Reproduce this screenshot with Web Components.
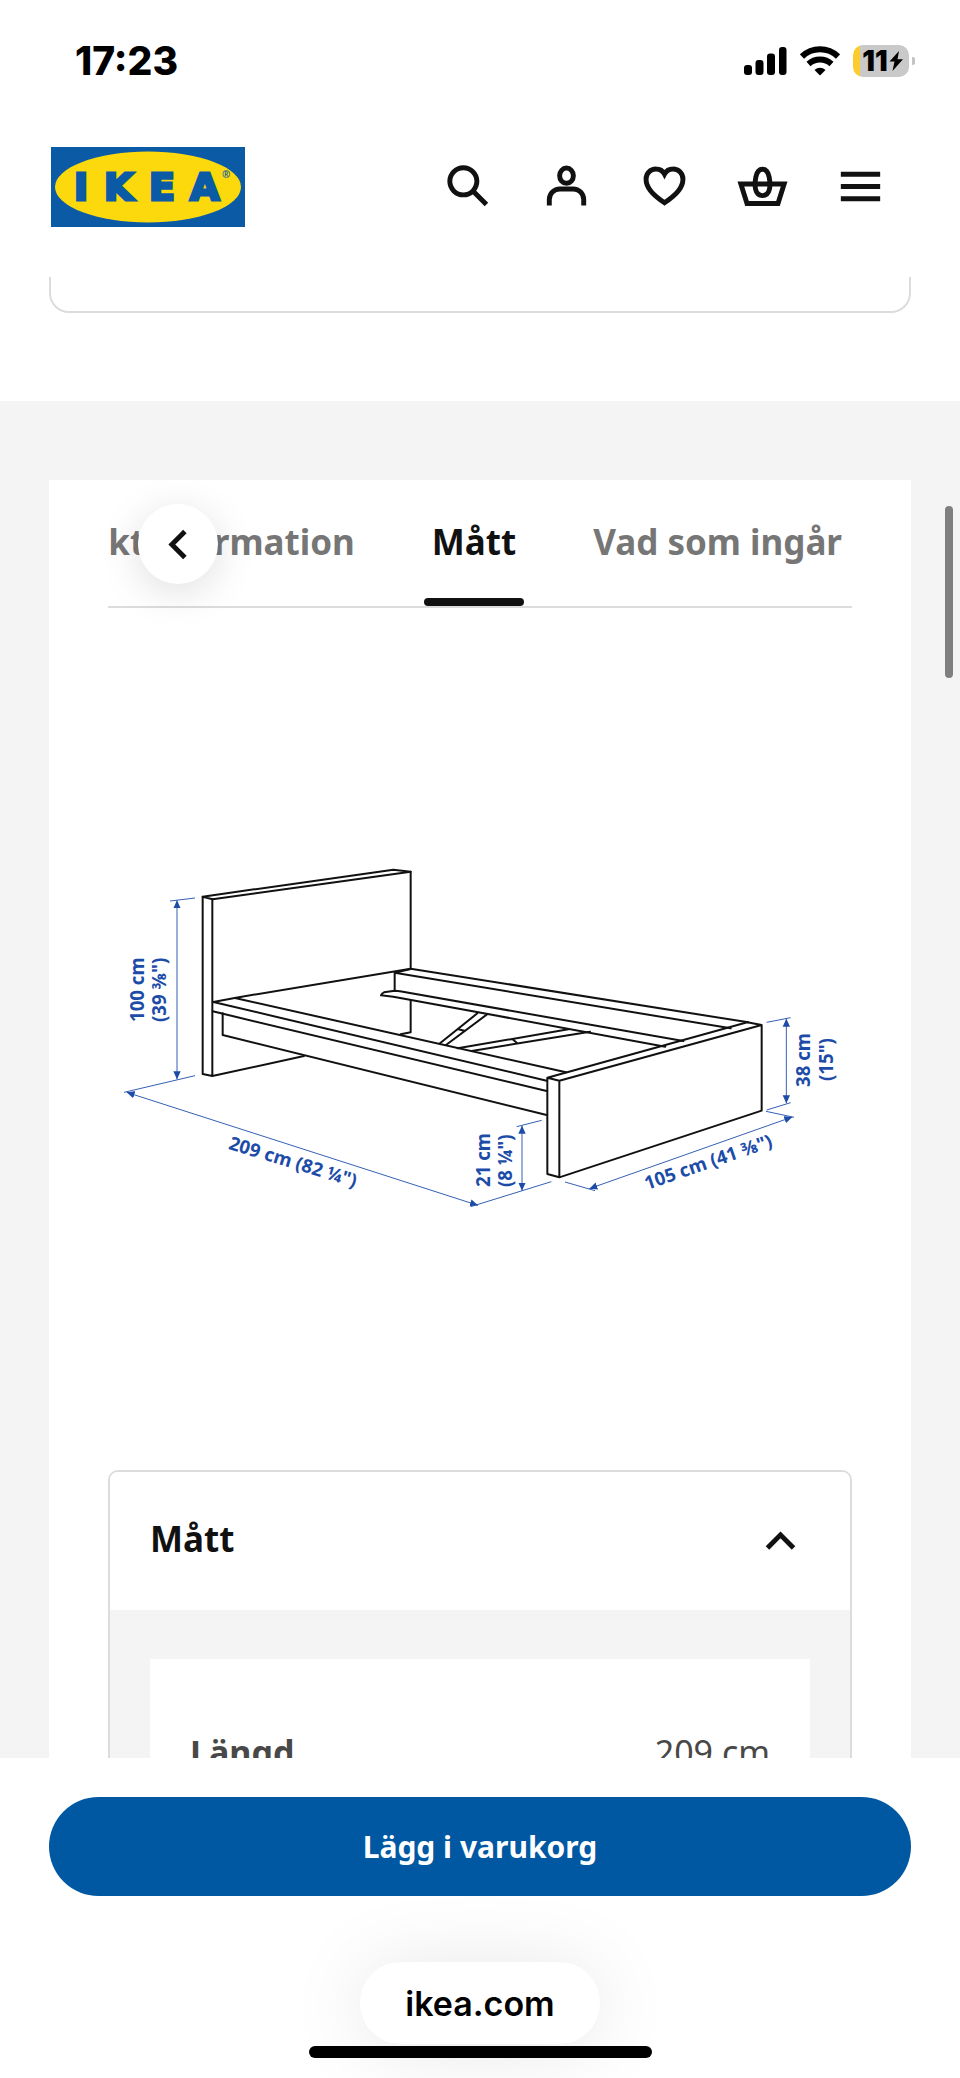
<!DOCTYPE html>
<html lang="sv">
<head>
<meta charset="utf-8">
<meta name="viewport" content="width=device-width, initial-scale=1">
<title>IKEA – Mått</title>
<style>
  html, body { height: 100%; }
  body {
    margin: 0;
    background: #fff;
    color: #111;
    font-family: "Noto Sans", sans-serif;
    overflow: hidden;
    --grey: #f4f4f4;
    --line: #dcdcdc;
    --ink: #111;
  }
</style>
</head>
<body>
<app-shell>
  <status-bar slot="top" time="17:23" battery="11"></status-bar>
  <site-header slot="top"></site-header>
  <card-end></card-end>
  <product-section>
    <tab-strip>
      <tab-item>Produktinformation</tab-item>
      <tab-item selected>Mått</tab-item>
      <tab-item>Vad som ingår</tab-item>
    </tab-strip>
    <bed-drawing></bed-drawing>
    <fold-panel heading="Mått">
      <measure-table label="Längd" value="209 cm"></measure-table>
    </fold-panel>
  </product-section>
  <buy-bar slot="bottom">Lägg i varukorg</buy-bar>
  <browser-pill slot="bottom">ikea.com</browser-pill>
</app-shell>

<script>
function define(name, render) {
  customElements.define(name, class extends HTMLElement {
    connectedCallback() {
      if (this.shadowRoot) return;
      this.attachShadow({ mode: 'open' }).innerHTML = render(this);
    }
  });
}

/* Icons on a 24-unit grid */
const ICONS = {
  search: '<circle cx="9.9" cy="9.9" r="5.5"/><path d="M13.9 13.9l5.4 5.4"/>',
  person: '<ellipse cx="12" cy="7.6" rx="2.8" ry="3.1"/><path d="M5 19.7v-2.4a4.3 4.3 0 0 1 4.3-4.3h5.4a4.3 4.3 0 0 1 4.3 4.3v2.4"/>',
  heart: '<path d="M12 18.600C8.200 16.200 4.500 12.700 4.500 9.100a4 4 0 0 1 4.100-4.200c1.500 0 2.700.8 3.400 2.100.7-1.300 1.900-2.100 3.400-2.100a4 4 0 0 1 4.100 4.200c0 3.600-3.700 7.100-7.500 9.500z"/>',
  basket: '<path d="M3.200 11h17.600l-2.500 7.900H5.700z"/><path d="M12 5c1.600 0 2.300 1.200 2.700 3.100.6 3.300.6 7.600-2.700 7.600s-3.300-4.300-2.700-7.600C9.700 6.200 10.400 5 12 5z"/>',
  menu: '<path d="M4 7h16M4 12h16M4 17h16"/>',
  left: '<path d="M14.600 6.700L9.300 12l5.300 5.300"/>',
  up: '<path d="M6.700 14.600L12 9.300l5.300 5.300"/>'
};
define('line-icon', el => `
  <style>
    :host { display: block; width: 59px; height: 59px; }
    svg { display: block; width: 100%; height: 100%; fill: none; stroke: var(--ink); stroke-width: 2; }
  </style>
  <svg viewBox="0 0 24 24" aria-hidden="true">${ICONS[el.getAttribute('name')]}</svg>`);

define('app-shell', () => `
  <style>
    :host { display: flex; flex-direction: column; height: 100vh; position: relative; }
    main { flex: 1; min-height: 0; overflow: hidden; }
    .thumb { position: absolute; right: 7px; top: 506px; width: 8px; height: 172px; border-radius: 4px; background: #7f7f7f; }
  </style>
  <slot name="top"></slot>
  <main><slot></slot></main>
  <slot name="bottom"></slot>
  <div class="thumb"></div>`);

define('status-bar', el => `
  <style>
    :host { display: flex; justify-content: space-between; align-items: center; padding: 38px 45px 38px 75px;
      font-family: Inter, sans-serif; color: #000; }
    .time { font-size: 39px; line-height: 46px; font-weight: 800; }
    .right { display: flex; align-items: center; gap: 13px; }
    svg { display: block; }
    .cell { display: flex; align-items: center; gap: 3px; }
    .battery { display: flex; align-items: center; justify-content: center; gap: 1px; width: 56px; height: 32px; box-sizing: border-box;
      padding-left: 3px; border-radius: 10px; background: linear-gradient(90deg, #fccb2e 7px, #c9c9c9 7px);
      font-size: 28px; line-height: 32px; font-weight: 900; }
  </style>
  <span class="time">${el.getAttribute('time')}</span>
  <div class="right">
    <svg width="43" height="30" viewBox="0 0 43 30" aria-hidden="true">
      <rect x="0" y="19" width="8" height="10" rx="3"/><rect x="11.500" y="14" width="8" height="15" rx="3"/>
      <rect x="23" y="7.500" width="8" height="21.500" rx="3"/><rect x="35" y="1" width="7.500" height="28" rx="3"/>
    </svg>
    <svg width="40" height="30" viewBox="0 0 40 30" aria-hidden="true">
      <g fill="none" stroke="#000" stroke-width="6"><path d="M2 10.500a26 26 0 0 1 36 0"/><path d="M8.500 18a17 17 0 0 1 23 0"/></g>
      <path d="M20 29.500l-5.500-5.500a8 8 0 0 1 11 0z"/>
    </svg>
    <div class="cell">
      <div class="battery"><span>${el.getAttribute('battery')}</span>
        <svg width="14" height="20" viewBox="0 0 14 20" aria-hidden="true"><path d="M10 0L.5 10.500h5L3.500 20 14 8.300H8.500z"/></svg>
      </div>
      <svg width="3" height="8" viewBox="0 0 3 8" aria-hidden="true"><path d="M0 0a4 4 0 0 1 0 8z" fill="#c4c4c4"/></svg>
    </div>
  </div>`);

define('ikea-logo', () => `
  <style>
    :host { display: block; }
    svg { display: block; }
    .word { font: 700 38px "DejaVu Sans", sans-serif; fill: #0b5aa5; stroke: #0b5aa5; stroke-width: 3; }
    .reg { font: 700 10px "Noto Sans", sans-serif; fill: #0b5aa5; }
  </style>
  <svg width="194" height="80" viewBox="0 0 194 80" role="img" aria-label="IKEA">
    <rect width="194" height="80" fill="#0b5aa5"/>
    <ellipse cx="97" cy="40" rx="93" ry="35.500" fill="#fbd90c"/>
    <text class="word" x="23 53 98 139" y="53">IKEA</text>
    <text class="reg" x="171" y="31">®</text>
  </svg>`);

define('site-header', () => `
  <style>
    :host { display: flex; align-items: center; justify-content: space-between; padding: 25px 70px 50px 51px; background: #fff; }
    nav { display: flex; gap: 39px; padding-bottom: 1px; }
    button { border: 0; padding: 0; background: none; display: block; }
    a { display: block; }
  </style>
  <a href="#" aria-label="IKEA"><ikea-logo></ikea-logo></a>
  <nav>
    ${[['search', 'Sök'], ['person', 'Konto'], ['heart', 'Favoriter'], ['basket', 'Varukorg'], ['menu', 'Meny']]
      .map(([n, l]) => `<button aria-label="${l}"><line-icon name="${n}"></line-icon></button>`).join('')}
  </nav>`);

define('card-end', () => `
  <style>
    :host { display: block; padding: 0 49px 88px; background: #fff; }
    div { height: 34px; border: 2px solid var(--line); border-top: 0; border-radius: 0 0 20px 20px; }
  </style><div></div>`);

define('product-section', () => `
  <style>
    :host { display: block; padding: 79px 49px 0; background: var(--grey); }
    div { background: #fff; padding: 0 59px 60px; }
  </style><div><slot></slot></div>`);

define('tab-strip', () => `
  <style>
    :host { display: block; position: relative; }
    .tabs { display: flex; justify-content: flex-end; gap: 61px; padding-right: 2px; overflow: hidden; border-bottom: 2px solid var(--line); }
    button { position: absolute; left: 30px; top: 24px; width: 80px; height: 80px; display: grid; place-items: center;
      border: 0; padding: 0; border-radius: 40px; background: #fff; box-shadow: 0 8px 40px rgba(0, 0, 0, .13); }
  </style>
  <div class="tabs" role="tablist"><slot></slot></div>
  <button aria-label="Föregående"><line-icon name="left"></line-icon></button>`);

define('tab-item', () => `
  <style>
    :host { display: block; flex: none; }
    button { display: block; border: 0; background: none; font: inherit; font-size: 35px; line-height: 48px; font-weight: 700;
      white-space: nowrap; color: #767676; padding: 38px 8px 32px; }
    i { display: block; height: 8px; border-radius: 4px; }
    :host([selected]) button { color: var(--ink); }
    :host([selected]) i { background: var(--ink); }
  </style>
  <button role="tab"><slot></slot></button><i></i>`);

/* Line drawing of the bed, three drawing units to a pixel */
define('bed-drawing', () => `
  <style>
    :host { display: block; margin: 59px 0; }
    svg { display: block; width: 100%; height: auto; }
    .bed { fill: none; stroke: #111; stroke-width: 6; stroke-linejoin: round; stroke-linecap: round; }
    .dim { fill: none; stroke: #3560b4; stroke-width: 3; }
    .arrow { marker-start: url(#tip); marker-end: url(#tip); }
    text { font: 700 56px "Noto Sans", sans-serif; fill: #1c4ca8; }
  </style>
  <svg viewBox="0 0 2232 2232" role="img" aria-label="Måttskiss">
    <defs>
      <marker id="tip" viewBox="0 0 24 24" refX="24" refY="12" markerWidth="24" markerHeight="24" markerUnits="userSpaceOnUse" orient="auto-start-reverse">
        <path d="M0 1L24 12 0 23z" fill="#1c4ca8"/>
      </marker>
    </defs>
    <g transform="translate(-24 519)">
      <g class="bed">
        <path d="M308 170L880 89L932 95L338 178Z"/>
        <path d="M308 170V702L337 708V178M337 708L612 648M932 95V386"/>
        <path d="M340 486L408 473L932 386"/>
        <path d="M340 486L1340 722M405 474L1398 697M338 514L1340 753"/>
        <path d="M368 520V585L1340 825"/>
        <path d="M932 386L1945 547M884 398L1892 565M884 398L932 387M884 398V452"/>
        <path d="M1750 603L900 454L884 452L852 457Q845 460 843 466L880 470L1696 620"/>
        <path d="M932 482V577L902 583"/>
        <path d="M1020 610L1132 520M1038 615L1160 524M1073 567L1095 573"/>
        <path d="M1073 625L1405 568M1115 633L1470 575M1238 598L1250 608"/>
        <path d="M1342 713L1378 722V1012L1342 1002ZM1342 713L1942 547L1985 555L1378 722M1985 555V812L1378 1012"/>
      </g>
      <g class="dim">
        <path d="M210 183L285 174M285 707L72 757M1112 1100L1354 1025M1250 860L1325 841M1395 1026L1485 1052M1998 814L2082 832M2000 547L2072 533M2000 810L2072 788"/>
        <g class="arrow">
          <path d="M231 181V718"/><path d="M80 757L1134 1096"/><path d="M1266 857V1052"/>
          <path d="M1468 1046L2077 831"/><path d="M2059 536V790"/>
        </g>
      </g>
      <text transform="translate(131 546) rotate(-90)">100 cm</text>
      <text transform="translate(198 546) rotate(-90)">(39 ⅜")</text>
      <text transform="translate(383 926) rotate(17)">209 cm (82 ¼")</text>
      <text transform="translate(1169 1041) rotate(-90)">21 cm</text>
      <text transform="translate(1236 1041) rotate(-90)">(8 ¼")</text>
      <text transform="translate(1641 1050) rotate(-19)">105 cm (41 ⅜")</text>
      <text transform="translate(2131 741) rotate(-90)">38 cm</text>
      <text transform="translate(2198 723) rotate(-90)">(15")</text>
    </g>
  </svg>`);

define('fold-panel', el => `
  <style>
    :host { display: block; border: 2px solid var(--line); border-radius: 10px; overflow: hidden; }
    h2 { margin: 0; }
    button { display: flex; width: 100%; align-items: flex-start; justify-content: space-between; border: 0; background: #fff;
      padding: 40px 40px 39px; font: inherit; font-size: 35px; line-height: 54px; font-weight: 700; color: var(--ink); text-align: left; }
    .body { background: var(--grey); padding: 49px 40px; }
  </style>
  <h2><button aria-expanded="true">${el.getAttribute('heading')}<line-icon name="up"></line-icon></button></h2>
  <div class="body"><slot></slot></div>`);

define('measure-table', el => `
  <style>
    :host { display: block; background: #fff; padding: 69px 40px; }
    table { width: 100%; border-collapse: collapse; font-size: 34px; line-height: 48px; color: #484848; }
    th, td { padding: 0; font-weight: 400; text-align: right; }
    th { font-weight: 700; text-align: left; }
  </style>
  <table><tr><th scope="row">${el.getAttribute('label')}</th><td>${el.getAttribute('value')}</td></tr></table>`);

define('buy-bar', () => `
  <style>
    :host { display: block; padding: 39px 49px 66px; background: #fff; }
    button { display: block; width: 100%; border: 0; border-radius: 50px; background: #0058a3; color: #fff; padding: 28px 40px 27px;
      font: inherit; font-size: 30px; line-height: 44px; font-weight: 700; }
  </style>
  <button><slot></slot></button>`);

define('browser-pill', () => `
  <style>
    :host { display: flex; flex-direction: column; align-items: center; gap: 2px; padding-bottom: 20px; }
    button { border: 0; border-radius: 41px; background: #fff; padding: 18px 45px 16px; font: 600 34px/48px Inter, sans-serif; color: #000;
      box-shadow: 0 4px 80px rgba(0, 0, 0, .1); }
    div { width: 343px; height: 12px; border-radius: 6px; background: #000; position: relative; }
  </style>
  <button><slot></slot></button>
  <div></div>`);
</script>
</body>
</html>
